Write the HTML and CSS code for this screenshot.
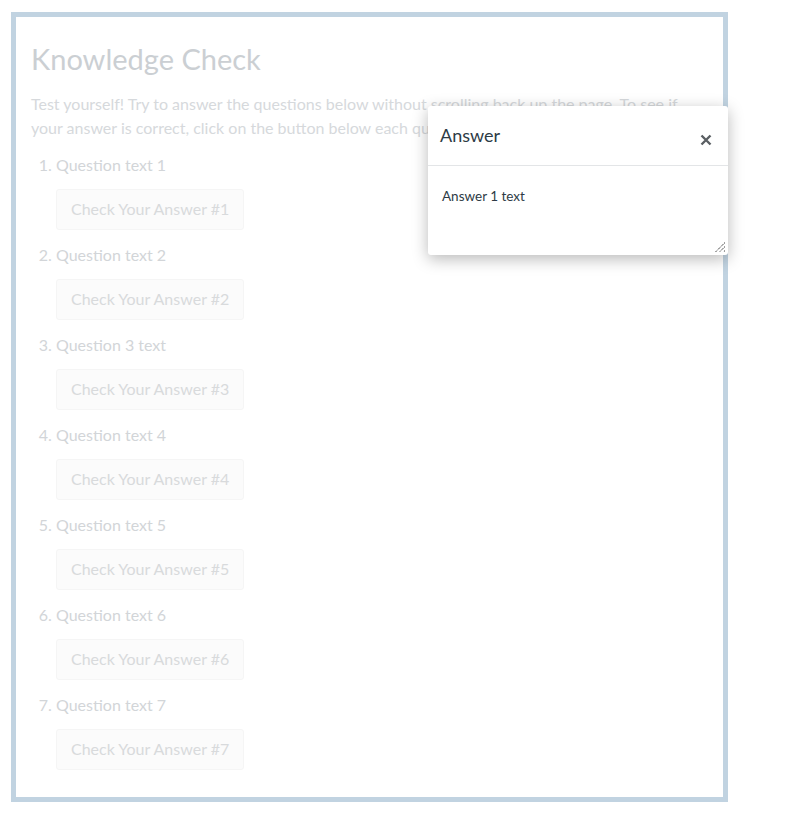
FILE: index.html
```html
<!DOCTYPE html>
<html>
<head>
<meta charset="utf-8">
<link rel="stylesheet" href="styles.css">
</head>
<body>
<div class="page">
  <h2 class="title">Knowledge Check</h2>
  <p class="intro">Test yourself! Try to answer the questions below without scrolling back up the page. To see if your answer is correct, click on the button below each question.</p>
  <ol class="questions">
    <li>Question text 1<button class="check">Check Your Answer #1</button></li>
    <li>Question text 2<button class="check">Check Your Answer #2</button></li>
    <li>Question 3 text<button class="check">Check Your Answer #3</button></li>
    <li>Question text 4<button class="check">Check Your Answer #4</button></li>
    <li>Question text 5<button class="check">Check Your Answer #5</button></li>
    <li>Question text 6<button class="check">Check Your Answer #6</button></li>
    <li>Question text 7<button class="check">Check Your Answer #7</button></li>
  </ol>
</div>
<div class="dialog">
  <div class="dialog-head">
    <span class="dialog-title">Answer</span>
    <svg class="close" width="12" height="12" viewBox="0 0 12 12"><path d="M1.5 1.5 L10.5 10.5 M10.5 1.5 L1.5 10.5" stroke="#5a5f63" stroke-width="2.4" stroke-linecap="butt"/></svg>
  </div>
  <div class="dialog-body">Answer 1 text</div>
  <svg class="grip" width="12" height="12" viewBox="0 0 12 12"><path d="M11 1.5 L1.5 11 M11 5.5 L5.5 11 M11 9.5 L9.5 11" stroke="#222" stroke-width="1" stroke-dasharray="1.2 0.8"/></svg>
</div>
</body>
</html>
```
FILE: styles.css
```css
html, body { margin: 0; padding: 0; background: #fff; }
body { font-family: Lato, "Open Sans", sans-serif; }
.page {
  margin: 12px 0 0 11px;
  box-sizing: border-box;
  width: 717px;
  height: 790px;
  border: 5px solid #c1d3e1;
  padding: 22px 15px 0 15px;
}
.title {
  margin: 0;
  font-size: 29px;
  font-weight: 400;
  line-height: 40px;
  color: #cbcfd3;
}
.intro {
  margin: 13px 0 0;
  font-size: 16px;
  line-height: 24px;
  color: #d6d9dc;
}
.questions {
  margin: 13px 0 0;
  padding-left: 25px;
  font-size: 16px;
  line-height: 24px;
  color: #d2d5d8;
}
.questions li { margin-bottom: 13px; }
.check {
  display: block;
  margin-top: 12px;
  box-sizing: border-box;
  font-family: Lato, "Open Sans", sans-serif;
  font-size: 16px;
  line-height: 20px;
  padding: 9px 14px 10px;
  background: #fbfbfb;
  border: 1px solid #f5f5f5;
  border-radius: 3px;
  color: #d8dadc;
  width: 188px;
  white-space: nowrap;
  text-align: left;
}
.dialog {
  position: absolute;
  left: 428px;
  top: 106px;
  width: 300px;
  height: 149px;
  background: #fff;
  border-radius: 3px;
  box-shadow: 0 4px 16px rgba(0,0,0,0.28);
  display: flex;
  flex-direction: column;
}
.dialog-head {
  height: 59px;
  border-bottom: 1px solid #e3e5e7;
  display: flex;
  align-items: center;
  justify-content: space-between;
  padding: 0 16px 0 12px;
}
.dialog-title {
  font-size: 18px;
  color: #2d3b45;
  margin-top: -1px;
}
.close { margin-top: 8px; }
.dialog-body {
  padding: 22px 14px;
  font-size: 13.5px;
  color: #2d3b45;
}
.grip { position: absolute; right: 2px; bottom: 2px; }
```
